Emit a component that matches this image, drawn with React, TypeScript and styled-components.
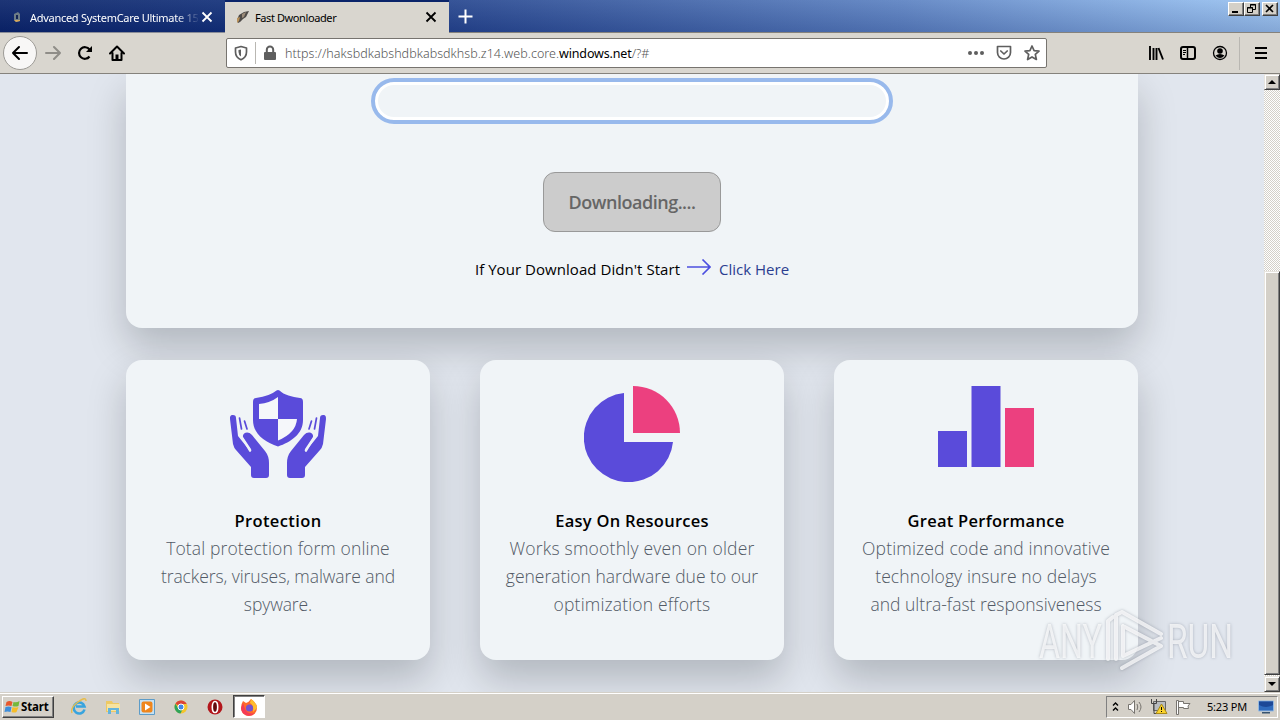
import React from 'react';
import styled, { createGlobalStyle } from 'styled-components';

const GlobalStyle = createGlobalStyle`
  * { box-sizing: border-box; }
  body { margin: 0; overflow: hidden; }
`;

const ui = `'Noto Sans', 'DejaVu Sans', sans-serif`;
const web = `'Open Sans', 'Noto Sans', sans-serif`;

const Screen = styled.div`
  width: 1280px;
  height: 720px;
  display: flex;
  flex-direction: column;
  overflow: hidden;
  background: #d4d0c8;
  font-family: ${ui};
  font-size: 11px;
  color: #000;
`;

const Label = styled.span<{ $gap?: number }>`
  white-space: pre;
  letter-spacing: ${p => p.$gap ?? 0}px;
`;

/* Title bar and tabs */
const TitleBar = styled.header`
  height: 33px;
  flex: none;
  display: flex;
  align-items: stretch;
  background:
    linear-gradient(180deg, rgba(255, 255, 255, 0.08), rgba(0, 10, 70, 0.16)),
    linear-gradient(90deg, #0a246a 0, #123079 220px, #26468f 450px, #5c82c2 900px, #8fb8ea 1200px, #9cc4f0 1280px);
`;

const Tab = styled.div<{ $active?: boolean }>`
  width: ${p => (p.$active ? 224 : 225)}px;
  display: flex;
  align-items: center;
  padding: 0 11px 0 ${p => (p.$active ? 10 : 9)}px;
  color: ${p => (p.$active ? '#000' : '#fff')};
  background: ${p => (p.$active ? '#d9d6cf' : 'transparent')};
  border-top: 2px solid ${p => (p.$active ? '#0a246a' : 'transparent')};
  border-bottom: 1px solid ${p => (p.$active ? '#d9d6cf' : '#8a8d98')};
  svg { flex: none; }
`;

const TabTitle = styled.div<{ $fade?: boolean }>`
  width: ${p => (p.$fade ? 171 : 170)}px;
  flex: none;
  margin-left: ${p => (p.$fade ? 5 : 4)}px;
  ${p => p.$fade && 'mask-image: linear-gradient(90deg, #000 145px, transparent 170px);'}
`;

const TabSpacer = styled.div`
  flex: 1;
  display: flex;
  align-items: center;
  padding-left: 9px;
  border-bottom: 1px solid #85827c;
`;

const WindowButtons = styled.div`
  display: flex;
  height: 33px;
  padding: 2px 2px 0 0;
  border-bottom: 1px solid #85827c;
`;

const WindowButton = styled.div<{ $apart?: boolean }>`
  width: 16px;
  height: 14px;
  margin-left: ${p => (p.$apart ? 2 : 0)}px;
  background: #d4d0c8;
  border: 1px solid;
  border-color: #fff #404040 #404040 #fff;
  box-shadow: inset -1px -1px #808080;
  display: flex;
`;

/* Navigation toolbar */
const Toolbar = styled.nav`
  height: 41px;
  flex: none;
  display: flex;
  align-items: center;
  padding: 0 11px 0 3px;
  background: #d9d6cf;
  border-bottom: 1px solid #85827c;
`;

const BackButton = styled.div`
  width: 34px;
  height: 34px;
  border-radius: 50%;
  border: 1px solid #9d9b96;
  background: #f8f7f6;
  display: grid;
  place-items: center;
`;

const NavIcons = styled.div`
  width: 189px;
  display: flex;
  gap: 16px;
  padding-left: 8px;
  svg { display: block; }
`;

const AddressBar = styled.div`
  width: 821px;
  height: 30px;
  display: flex;
  align-items: center;
  background: #fff;
  border: 1px solid #77746f;
  border-radius: 2px;
  padding: 0 6px;
  color: #555;
`;

const Divider = styled.i<{ $h: number; $left: number; $right: number }>`
  width: 1px;
  height: ${p => p.$h}px;
  margin: 0 ${p => p.$right}px 0 ${p => p.$left}px;
  background: #b9b7b2;
`;

const Url = styled.div`
  flex: 1;
  font-size: 12.5px;
  margin-left: 7px;
  white-space: pre;
  letter-spacing: 0.04px;
  font-weight: 300;
  b { color: #000; font-weight: 400; letter-spacing: -0.15px; }
`;

const AddressActions = styled.div`
  display: flex;
  gap: 12px;
`;

const ToolbarActions = styled.div`
  margin-left: auto;
  display: flex;
  align-items: center;
`;

const ToolGroup = styled.div`
  display: flex;
  gap: 16px;
`;

/* Page */
const Viewport = styled.div`
  height: 618px;
  flex: none;
  display: flex;
`;

const Page = styled.main`
  width: 1264px;
  height: 618px;
  overflow: hidden;
  background: #e1e6ee;
  padding: 0 126px;
  display: flex;
  flex-direction: column;
  gap: 32px;
  font-family: ${web};
`;

const shadow = `0 19px 38px rgba(0, 8, 16, 0.21)`;

const DownloadPanel = styled.section`
  height: 254px;
  flex: none;
  display: flex;
  flex-direction: column;
  align-items: center;
  padding-top: 4px;
  background: #f0f4f7;
  border-radius: 0 0 16px 16px;
  box-shadow: ${shadow};
`;

const ProgressField = styled.div`
  width: 522px;
  height: 46px;
  border: 4px solid #98b9ec;
  border-radius: 23px;
  background: #f0f4f7;
  box-shadow: inset 0 0 0 3px #fff;
`;

const DownloadButton = styled.button`
  width: 178px;
  height: 60px;
  margin-top: 48px;
  padding: 0;
  border: 1px solid #999;
  border-radius: 12px;
  background: #ccc;
  color: #666;
  font: 600 18px ${web};
`;

const Hint = styled.p`
  height: 28px;
  margin: 23px 0 0;
  display: flex;
  align-items: center;
  font-size: 15px;
  a { color: #2b3e90; }
  svg { margin: -5px 8px 0 7px; }
`;

const Cards = styled.div`
  display: grid;
  grid-template-columns: repeat(3, 304px);
  justify-content: space-between;
`;

const Card = styled.article`
  height: 300px;
  display: flex;
  flex-direction: column;
  align-items: center;
  padding-top: 26px;
  background: #f0f4f7;
  border-radius: 16px;
  box-shadow: ${shadow};
  svg { display: block; }
`;

const CardTitle = styled.h3`
  margin: 25px 0 -1px;
  font-size: 16.5px;
  line-height: 28px;
  font-weight: 600;
`;

const CardLine = styled.div`
  font-size: 17.5px;
  line-height: 28px;
  font-weight: 300;
  color: #525a66;
`;

/* Scroll bar */
const ScrollBar = styled.div`
  width: 16px;
  height: 618px;
  display: flex;
  flex-direction: column;
  background: repeating-conic-gradient(#fff 0 25%, #d4d0c8 0 50%) 0 0 / 2px 2px;
`;

const Raised = styled.div<{ $h: number; $top?: number }>`
  height: ${p => p.$h}px;
  margin-top: ${p => p.$top ?? 0}px;
  flex: none;
  background: #d4d0c8;
  border: 1px solid;
  border-color: #e8e5df #404040 #404040 #e8e5df;
  box-shadow: inset 1px 1px #fff, inset -1px -1px #808080;
  display: grid;
  place-items: center;
`;

/* Task bar */
const TaskBar = styled.footer`
  height: 28px;
  flex: none;
  display: flex;
  align-items: center;
  background: #d4d0c8;
  border-top: 1px solid #d4d0c8;
  box-shadow: inset 0 1px #fff;
  padding: 0 2px;
`;

const StartButton = styled.div`
  width: 52px;
  height: 22px;
  display: flex;
  align-items: center;
  padding-left: 1px;
  font-weight: 700;
  font-size: 11.5px;
  border: 1px solid;
  border-color: #fff #404040 #404040 #fff;
  box-shadow: inset -1px -1px #808080;
`;

const Shortcuts = styled.div`
  display: flex;
  align-items: center;
  gap: 18px;
  padding-left: 17px;
`;

const ActiveTask = styled.div`
  width: 32px;
  height: 23px;
  margin-left: 10px;
  display: grid;
  place-items: center;
  background: #fff;
  border: 1px solid;
  border-color: #404040 #fff #fff #404040;
  box-shadow: inset 1px 1px #808080;
`;

const Tray = styled.div`
  width: 172px;
  height: 22px;
  margin-left: auto;
  display: flex;
  align-items: center;
  gap: 7px;
  padding-left: 5px;
  border: 1px solid;
  border-color: #808080 #fff #fff #808080;
  svg { flex: none; }
`;

const Clock = styled.span`
  width: 40px;
  margin: 0 4px 0 8px;
  white-space: nowrap;
`;

const Watermark = styled.div`
  position: absolute;
  left: 1034px;
  top: 606px;
  width: 204px;
  height: 70px;
`;

function Hand() {
  return (
    <>
      <path d="M3 29C0 29 0 31 0 33L3 58Q4 62 6 64L21 81V89Q21 92 24 92H36Q39 92 39 89V77Q39 70 35 65L22 49C18 44 12 47 13 51L21 63Q22 66 20 65L8 50 6 32Q6 29 3 29Z" />
      <path d="M9.500 32 11.500 43M14.500 35 17 43" stroke="#5a4bda" strokeWidth="1.700" strokeLinecap="round" fill="none" />
      <path d="M10.500 49 20 65" stroke="#f0f4f7" strokeWidth="1.800" strokeLinecap="round" fill="none" />
    </>
  );
}

const ProtectionIcon = () => (
  <svg width="96" height="96" viewBox="0 0 96 96" fill="#5a4bda">
    <path d="M46.500 4.500Q48 3.500 49.500 4.500C54 9 62 11 70 12Q73 12 73 16V34C73 48 61 56 48 60.500 35 56 23 48 23 34V16Q23 12 26 12 40 10 46.500 4.500Z" />
    <path d="M48 11V33H29V18Q40 17 48 11ZM48 33H67Q66 47 48 54.500Z" fill="#f5f7fa" />
    <Hand />
    <g transform="translate(96 0) scale(-1 1)"><Hand /></g>
  </svg>
);

const PieIcon = () => (
  <svg width="96" height="96" viewBox="0 0 96 96">
    <path d="M40 7A44.700 44.700 0 1 0 89 56H40Z" fill="#5a4bda" />
    <path d="M49 0V47H96A47 47 0 0 0 49 0Z" fill="#ec407f" />
  </svg>
);

const BarsIcon = () => (
  <svg width="96" height="96" viewBox="0 0 96 96">
    <path d="M0 45H29V81H0ZM33.500 0H62.500V81H33.500Z" fill="#5a4bda" />
    <path d="M67 22H96V81H67Z" fill="#ec407f" />
  </svg>
);

const cards = [
  { icon: <ProtectionIcon />, title: 'Protection', gap: 0.4, lines: [
    { text: 'Total protection form online', gap: 0.13 },
    { text: 'trackers, viruses, malware and', gap: -0.08 },
    { text: 'spyware.', gap: -0.1 } ] },
  { icon: <PieIcon />, title: 'Easy On Resources', gap: 0.26, lines: [
    { text: 'Works smoothly even on older', gap: 0.22 },
    { text: 'generation hardware due to our', gap: 0 },
    { text: 'optimization efforts', gap: 0.17 } ] },
  { icon: <BarsIcon />, title: 'Great Performance', gap: 0.26, lines: [
    { text: 'Optimized code and innovative', gap: 0.17 },
    { text: 'technology insure no delays', gap: 0.1 },
    { text: 'and ultra-fast responsiveness', gap: 0 } ] },
];

const Cross = ({ color }: { color: string }) => (
  <svg width="12" height="12" viewBox="0 0 12 12" stroke={color} strokeWidth="1.800"><path d="M1.500 1.500 10.500 10.500M10.500 1.500 1.500 10.500" /></svg>
);

const TabsAndTitle = () => (
  <TitleBar>
    <Tab>
      <svg width="16" height="16" viewBox="0 0 16 16"><path d="M5 5 9 3 11 5V12L7 13 5 11Z" fill="#6e7d86" /><path d="M7 6H9V10H7Z" fill="#122454" /><path d="M5 11 7 13 11 12V11Z" fill="#d6a75b" /></svg>
      <TabTitle $fade><Label $gap={-0.28}>Advanced SystemCare Ultimate 15</Label></TabTitle>
      <Cross color="#fff" />
    </Tab>
    <Tab $active>
      <svg width="16" height="16" viewBox="0 0 16 16"><path d="M2 11 4 6 9 3 14 2 11 8 8 10 5 13 3 14Z" fill="#4d4a48" /><path d="M7 5 11 3 9 8 7 9Z" fill="#9b8b7a" /><path d="M2 9 5 8 4 12 2 14Z" fill="#b89058" /></svg>
      <TabTitle><Label $gap={-0.4}>Fast Dwonloader</Label></TabTitle>
      <Cross color="#000" />
    </Tab>
    <TabSpacer>
      <svg width="15" height="15" viewBox="0 0 15 15" stroke="#fff" strokeWidth="2"><path d="M7.500 .5V14.500M.5 7.500H14.500" /></svg>
    </TabSpacer>
    <WindowButtons>
      <WindowButton><svg width="14" height="12"><path d="M3 8H9V10H3Z" /></svg></WindowButton>
      <WindowButton><svg width="14" height="12" fill="none" stroke="#000"><path d="M5.500 4V1.500H10.500V6.500H8M5 2H11M2.500 4.500H7.500V9.500H2.500ZM2 5H8" /></svg></WindowButton>
      <WindowButton $apart><svg width="14" height="12" stroke="#000" strokeWidth="1.600"><path d="M3 2 10 9M10 2 3 9" /></svg></WindowButton>
    </WindowButtons>
  </TitleBar>
);

const BrowserToolbar = () => (
  <Toolbar>
    <BackButton>
      <svg width="18" height="16" viewBox="0 0 18 16" fill="none" stroke="#000" strokeWidth="2" strokeLinecap="round" strokeLinejoin="round"><path d="M16 8H2M8 2 2 8 8 14" /></svg>
    </BackButton>
    <NavIcons>
      <svg width="16" height="16" viewBox="0 0 16 16" fill="none" stroke="#8f8d88" strokeWidth="2" strokeLinecap="round" strokeLinejoin="round"><path d="M1 8H15M9 2 15 8 9 14" /></svg>
      <svg width="16" height="16" viewBox="0 0 16 16" fill="none" stroke="#000" strokeWidth="2.200"><path d="M12.500 11.500A5.800 5.800 0 1 1 12.500 4.500" /><path d="M15 1V7H9Z" fill="#000" stroke="none" /></svg>
      <svg width="16" height="16" viewBox="0 0 16 16" fill="none" stroke="#000" strokeWidth="2" strokeLinejoin="round" strokeLinecap="round"><path d="M1 8.500 8 1.500 15 8.500M3.500 8V15H12.500V8" /><path d="M6.500 9.500H9.500V15H6.500Z" fill="#000" stroke="none" /></svg>
    </NavIcons>
    <AddressBar>
      <svg width="16" height="16" viewBox="0 0 16 16" fill="none" stroke="#5e5e5e" strokeWidth="1.700" strokeLinejoin="round"><path d="M8 1.500 13.500 3V7C13.500 11 11 13.500 8 14.800 5 13.500 2.500 11 2.500 7V3Z" /><path d="M8 4.500V11.500Q5.500 10 5.500 7V5Z" fill="#5e5e5e" stroke="none" /></svg>
      <Divider $h={22} $left={6} $right={6} />
      <svg width="16" height="16" viewBox="0 0 16 16"><path d="M4.800 7V4.800A3.200 3.200 0 0 1 11.200 4.800V7" fill="none" stroke="#5e5e5e" strokeWidth="2" /><rect x="2" y="7" width="12" height="8" rx="1" fill="#5e5e5e" /></svg>
      <Url>https://haksbdkabshdbkabsdkhsb.z14.web.core.<b>windows.net</b>/?#</Url>
      <AddressActions>
        <svg width="16" height="16" viewBox="0 0 16 16" fill="#5e5e5e"><circle cx="2" cy="8" r="2" /><circle cx="8" cy="8" r="2" /><circle cx="14" cy="8" r="2" /></svg>
        <svg width="16" height="16" viewBox="0 0 16 16" fill="none" stroke="#5e5e5e" strokeWidth="1.700" strokeLinecap="round" strokeLinejoin="round"><path d="M1.500 1.500H14.500V7.500A6.500 6.500 0 0 1 1.500 7.500ZM4.800 6 8 9 11.200 6" /></svg>
        <svg width="16" height="16" viewBox="0 0 16 16" fill="none" stroke="#5e5e5e" strokeWidth="1.700" strokeLinejoin="round"><path d="M8 1 10.100 5.600 15 6.100 11.300 9.400 12.400 14.500 8 11.900 3.600 14.500 4.700 9.400 1 6.100 5.900 5.600Z" /></svg>
      </AddressActions>
    </AddressBar>
    <ToolbarActions>
      <ToolGroup>
        <svg width="16" height="16" viewBox="0 0 16 16" fill="none" stroke="#000"><path d="M2 1V15M5.500 3V15M8.500 3V15M10.500 3 15 14.500" strokeWidth="1.900" /></svg>
        <svg width="16" height="16" viewBox="0 0 16 16" fill="none" stroke="#000"><rect x="1" y="2" width="14" height="12" rx="2" strokeWidth="2" /><path d="M7.500 2V14" strokeWidth="1.500" /><path d="M3 5.500H6M3 7.500H6M3 9.500H5" strokeWidth="1" /></svg>
        <svg width="16" height="16" viewBox="0 0 16 16"><circle cx="8" cy="8" r="6.500" fill="none" stroke="#000" strokeWidth="1.300" /><circle cx="8" cy="6" r="2.800" /><path d="M3.500 10.500Q8 7.500 12.500 10.500 8 15.500 3.500 10.500Z" /></svg>
      </ToolGroup>
      <Divider $h={33} $left={11} $right={13} />
      <svg width="16" height="16" viewBox="0 0 16 16" stroke="#000" strokeWidth="2"><path d="M2 3H14M2 8H14M2 13H14" /></svg>
    </ToolbarActions>
  </Toolbar>
);

const WebPage = () => (
  <Page>
    <DownloadPanel>
      <ProgressField />
      <DownloadButton><Label $gap={-0.48}>Downloading....</Label></DownloadButton>
      <Hint>
        <Label $gap={0.05}>If Your Download Didn't Start</Label>
        <svg width="24" height="16" viewBox="0 0 24 16" fill="none" stroke="#4c4fe0" strokeWidth="1.600"><path d="M0 8H23M15.500 .5 23 8 15.500 15.500" /></svg>
        <a><Label $gap={0}>Click Here</Label></a>
      </Hint>
    </DownloadPanel>
    <Cards>
      {cards.map(card => (
        <Card key={card.title}>
          {card.icon}
          <CardTitle><Label $gap={card.gap}>{card.title}</Label></CardTitle>
          {card.lines.map(line => (
            <CardLine key={line.text}><Label $gap={line.gap}>{line.text}</Label></CardLine>
          ))}
        </Card>
      ))}
    </Cards>
  </Page>
);

const WindowsTaskBar = () => (
  <TaskBar>
    <StartButton>
      <svg width="17" height="16" viewBox="0 0 16 16"><path d="M2 3Q5 1 8 3L7 7Q4 6 1 7Z" fill="#e8582d" /><path d="M9 3Q12 4 15 2L14 7Q11 8 8 7Z" fill="#75b83c" /><path d="M1 8Q4 7 7 8L6 13Q3 12 0 13Z" fill="#3e8edb" /><path d="M8 8Q11 9 14 8L12 13Q10 14 7 13Z" fill="#f6bd28" /></svg>
      <Label $gap={-0.15}>Start</Label>
    </StartButton>
    <Shortcuts>
      <svg width="16" height="17" viewBox="0 0 16 17" fill="none"><path d="M13.500 11.500A5.500 5.500 0 1 1 13.500 8.500H5" stroke="#38a4de" strokeWidth="2.600" /><path d="M1 15Q-1 10 7 4T15 3" stroke="#e7bd4c" strokeWidth="1.400" /></svg>
      <svg width="16" height="16" viewBox="0 0 16 16"><path d="M1 2H7L8 4H14V13H1Z" fill="#edc964" /><path d="M2 5H15V12H2Z" fill="#f6e3a0" /><path d="M3 15V9H14V15H11V11H6V15Z" fill="#64b4dc" /></svg>
      <svg width="16" height="16" viewBox="0 0 16 16"><path d="M.5 .5H15.500V15.500H.5Z" fill="#c6e1f2" stroke="#5d9cc8" /><rect x="2.500" y="2.500" width="11" height="11" rx="2" fill="#ef861c" /><path d="M6 4.500 11.500 8 6 11.500Z" fill="#fff" /></svg>
      <svg width="16" height="16" viewBox="0 0 16 16"><circle cx="8" cy="8" r="6.500" fill="#f4c52d" /><path d="M8 8 2.400 4.700A6.500 6.500 0 0 1 13.700 4.900L8 5Z" fill="#dc4437" /><path d="M2.400 4.700A6.500 6.500 0 0 0 7.500 14.500L10 9.500 5.500 9.500Z" fill="#2fa35a" /><circle cx="8" cy="8" r="3" fill="#4287e8" stroke="#fff" /></svg>
      <svg width="16" height="16" viewBox="0 0 16 16"><circle cx="8" cy="8" r="7.500" fill="#b3161b" /><ellipse cx="8" cy="8" rx="2.700" ry="5.500" fill="#64090d" stroke="#fff" strokeWidth="1.600" /></svg>
    </Shortcuts>
    <ActiveTask>
      <svg width="18" height="18" viewBox="0 0 18 18"><path d="M3 3 6 5Q9 4 11 1 17 5 17 10A8 8 0 0 1 1 10Q1 6 3 3Z" fill="#ff6a2b" /><path d="M11 1Q17 5 17 10L13 14Q14 7 10 5Z" fill="#ffbd2e" /><path d="M1 10A8 8 0 0 0 15 15Q8 17 5 11L3 5Z" fill="#f53b56" /><circle cx="9.500" cy="10" r="3.600" fill="#7552cf" /></svg>
    </ActiveTask>
    <Tray>
      <svg width="7" height="12" viewBox="0 0 7 12" fill="none" stroke="#000" strokeWidth="1.400"><path d="M1 4.500 3.500 2 6 4.500M1 9.500 3.500 7 6 9.500" /></svg>
      <svg width="18" height="16" viewBox="0 0 18 16" fill="#fff" stroke="#77746f"><path d="M2.500 5.500H5L8.500 1.500V14.500L5 10.500H2.500Z" /><path d="M11 5Q12.500 8 11 11M13 3Q17 8 13 13" fill="none" /></svg>
      <svg width="17" height="17" viewBox="7 0 17 17"><path d="M9.500 3.500H21.500V12.500H9.500Z" fill="#b8bcc0" stroke="#666" /><path d="M7.500 1V5.500H12.500V1M10 6V15.500H15" fill="none" stroke="#444" /><path d="M17.500 6 23 15.500H12Z" fill="#fbd32b" stroke="#a98a18" /><path d="M17 9H18V12H17ZM17 13H18V14H17Z" /></svg>
      <svg width="17" height="16" viewBox="4 0 17 16" fill="#fff" stroke="#77746f"><path d="M5.500 1.500V15.500H7.500V1.500ZM7.500 2.500H12.500V4.500H19L17 7L17.500 9.500H12.500V8.500H7.500Z" /></svg>
      <Clock><Label $gap={-0.2}>5:23 PM</Label></Clock>
      <svg width="16" height="14" viewBox="0 0 16 14"><path d="M.5 1H15.500V11H.5Z" fill="#2f6bbd" stroke="#95b9df" /><path d="M1 1.500H15V5Q8 9 1 5Z" fill="#1c4897" /><path d="M4 12H12V13.500H4Z" fill="#37536f" /></svg>
    </Tray>
  </TaskBar>
);

const WatermarkText = styled.text`
  font-family: Roboto, sans-serif;
  font-size: 48px;
  font-weight: 400;
`;

const App = () => (
  <Screen>
    <GlobalStyle />
    <TabsAndTitle />
    <BrowserToolbar />
    <Viewport>
      <WebPage />
      <ScrollBar>
        <Raised $h={16}><svg width="8" height="4"><path d="M4 0 8 4H0Z" /></svg></Raised>
        <Raised $h={404} $top={181} />
        <Raised $h={16} $top={1}><svg width="8" height="4"><path d="M0 0H8L4 4Z" /></svg></Raised>
      </ScrollBar>
    </Viewport>
    <WindowsTaskBar />
    <Watermark>
      <svg width="204" height="70" viewBox="0 0 204 70" fill="#fff" fillOpacity=".72" overflow="visible" filter="drop-shadow(0 0 1.500px rgba(80,88,105,.5))">
        <WatermarkText x="5" y="52" textLength="63" lengthAdjust="spacingAndGlyphs">ANY</WatermarkText>
        <WatermarkText x="133" y="52" textLength="66" lengthAdjust="spacingAndGlyphs">RUN</WatermarkText>
        <g fill="none" stroke="#fff" strokeOpacity=".75" strokeWidth="4" strokeLinecap="round" strokeLinejoin="round">
          <path d="M74 53V15L79 11M82 53V9L88 6 127 28M89 20V50L127 32M89 20 127 40 88 62" />
        </g>
      </svg>
    </Watermark>
  </Screen>
);

export default App;
